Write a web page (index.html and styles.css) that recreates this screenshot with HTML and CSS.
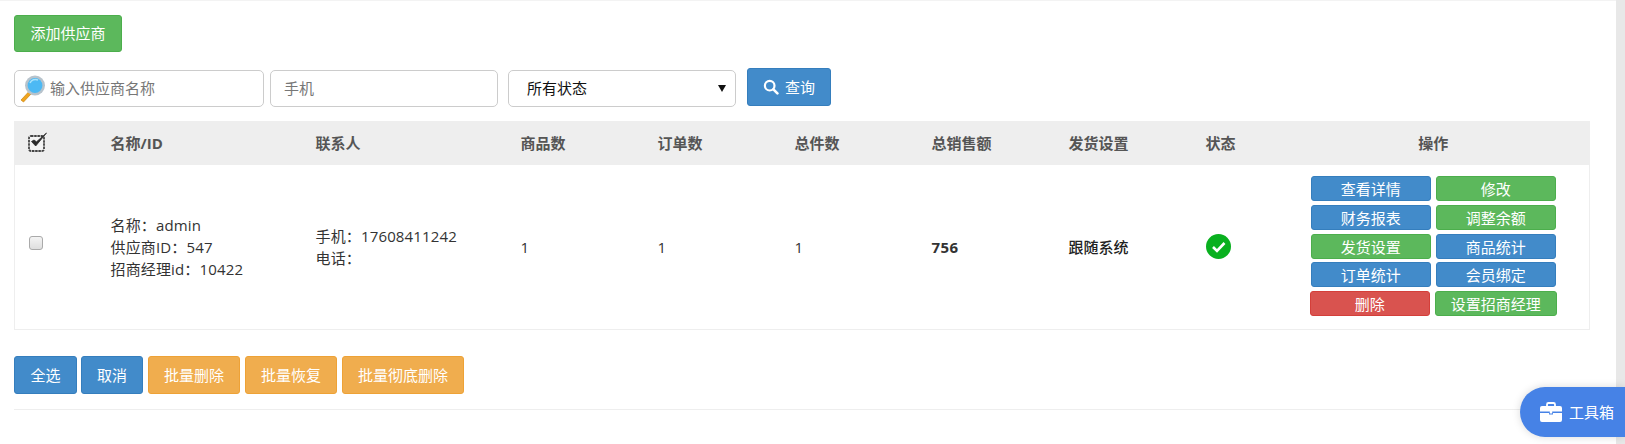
FILE: index.html
```html
<!DOCTYPE html>
<html lang="zh">
<head>
<meta charset="utf-8">
<title>供应商</title>
<link rel="stylesheet" href="styles.css">
</head>
<body>
<div class="scrollbar"></div>
<main class="page">
  <div class="add-row"><button class="btn green add">添加供应商</button></div>
  <form class="filters">
    <label class="input search">
      <svg class="lens" width="26" height="28" viewBox="0 0 26 28"><path d="M3.500 27 1 25 8.500 17 11 19Z" fill="#f0a51e" stroke="#c98412" stroke-width=".7"/><circle cx="15" cy="10.500" r="10" fill="#b7c3cc"/><circle cx="15" cy="10.500" r="7.400" fill="#4cb9f4"/><path d="M10 8a6 6 0 0 1 8-3" stroke="#a9e2fb" stroke-width="1.500" fill="none"/></svg>
      <span>输入供应商名称</span>
    </label>
    <label class="input phone"><span>手机</span></label>
    <div class="input status"><span>所有状态</span><i class="arrow"></i></div>
    <button type="button" class="btn blue query">
      <svg width="16" height="16" viewBox="0 0 16 16"><circle cx="6.700" cy="6.700" r="4.800" fill="none" stroke="#fff" stroke-width="2.200"/><path d="m10.400 10.400 4 4" stroke="#fff" stroke-width="2.600" stroke-linecap="round"/></svg>
      查询
    </button>
  </form>
  <table class="grid">
    <colgroup>
      <col class="c-check"><col class="c-wide"><col class="c-wide"><col class="c-num"><col class="c-num"><col class="c-num"><col class="c-num"><col class="c-num"><col class="c-state"><col>
    </colgroup>
    <thead>
      <tr>
        <th>
          <svg class="all" width="20" height="20" viewBox="0 0 20 20"><rect x="1" y="4" width="15" height="15" rx="2" fill="#f4f4f4" stroke="#444" stroke-width="1.800" stroke-dasharray="2.500 .7"/><path d="m3.500 9.500 4.200 4.500L18.500 1 8.500 9.800 6 8Z" fill="#2b2b2b" stroke="#2b2b2b" stroke-width=".8"/></svg>
        </th>
        <th>名称/ID</th><th>联系人</th><th>商品数</th><th>订单数</th><th>总件数</th><th>总销售额</th><th>发货设置</th><th>状态</th><th class="center">操作</th>
      </tr>
    </thead>
    <tbody>
      <tr>
        <td><span class="check"></span></td>
        <td class="lines">名称：admin<br>供应商ID：547<br>招商经理id：10422</td>
        <td class="lines">手机：17608411242<br>电话：</td>
        <td>1</td><td>1</td><td>1</td>
        <td class="strong">756</td>
        <td class="medium">跟随系统</td>
        <td>
          <svg class="ok" width="25" height="25" viewBox="0 0 25 25"><circle cx="12.500" cy="12.500" r="12.500" fill="#09b01f"/><path d="m7 13 4 4 7.500-8" fill="none" stroke="#fff" stroke-width="2.600"/></svg>
        </td>
        <td class="action-cell">
          <div class="actions">
            <button class="btn small blue">查看详情</button><button class="btn small green">修改</button>
            <button class="btn small blue">财务报表</button><button class="btn small green">调整余额</button>
            <button class="btn small green">发货设置</button><button class="btn small blue">商品统计</button>
            <button class="btn small blue lift">订单统计</button><button class="btn small blue lift">会员绑定</button>
            <button class="btn small red shift">删除</button><button class="btn small green shift wider">设置招商经理</button>
          </div>
        </td>
      </tr>
    </tbody>
  </table>
  <div class="batch">
    <button class="btn blue b1">全选</button>
    <button class="btn blue b2">取消</button>
    <button class="btn orange b3">批量删除</button>
    <button class="btn orange b3">批量恢复</button>
    <button class="btn orange b4">批量彻底删除</button>
  </div>
  <hr class="rule">
</main>
<aside class="toolbox">
  <svg width="22" height="20" viewBox="0 0 22 20"><path d="M7 4V2.500A1.500 1.500 0 0 1 8.500 1h5A1.500 1.500 0 0 1 15 2.500V4" fill="none" stroke="#fff" stroke-width="1.800"/><path d="M2 4h18a2 2 0 0 1 2 2v3.500H0V6a2 2 0 0 1 2-2ZM0 11h9v1.500h4V11h9v7a2 2 0 0 1-2 2H2a2 2 0 0 1-2-2Z" fill="#fff"/><rect x="9.800" y="9" width="2.400" height="2.500" fill="#fff"/></svg>
  <span>工具箱</span>
</aside>
</body>
</html>
```

FILE: styles.css
```css
* { box-sizing: border-box; }
html, body { margin: 0; height: 444px; overflow: hidden; }
body {
  background: #fff;
  color: #333;
  font: 15px/1.5 "Open Sans", "Noto Sans CJK SC", sans-serif;
  position: relative;
}
.page {
  width: 1616px;
  border-top: 1px solid #f3f3f3;
  padding: 14px 0 0 14px;
}
.scrollbar {
  position: absolute;
  top: 0;
  right: 0;
  bottom: 0;
  width: 9px;
  background: #e8e8e8;
}
.btn {
  display: block;
  margin: 0;
  padding: 0;
  border: 1px solid;
  border-radius: 3px;
  color: #fff;
  font: inherit;
  text-align: center;
}
.green { background: #5cb85c; border-color: #4cae4c; }
.blue { background: #428bca; border-color: #357ebd; }
.red { background: #d9534f; border-color: #d43f3a; }
.orange { background: #f0ad4e; border-color: #eea236; }
.add { width: 108px; height: 37px; }
.filters {
  display: flex;
  align-items: flex-start;
  margin-top: 16px;
  height: 53px;
}
.input {
  display: flex;
  align-items: center;
  height: 37px;
  margin-top: 2px;
  border: 1px solid #ccc;
  border-radius: 5px;
  color: #777;
  background: #fff;
}
.search { width: 250px; padding-left: 5px; gap: 4px; }
.lens { flex: none; }
.phone { width: 228px; margin-left: 6px; padding-left: 13px; }
.status {
  width: 228px;
  margin-left: 10px;
  padding: 0 9px 0 18px;
  color: #111;
  justify-content: space-between;
}
.arrow {
  width: 0;
  height: 0;
  border: 4px solid transparent;
  border-top: 7px solid #111;
  border-bottom: 0;
}
.query {
  display: flex;
  align-items: center;
  justify-content: center;
  gap: 6px;
  width: 84px;
  height: 38px;
  margin-left: 11px;
}
.grid {
  width: 1576px;
  border-collapse: collapse;
  table-layout: fixed;
  border: 1px solid #eee;
}
.c-check { width: 83px; }
.c-wide { width: 205px; }
.c-num { width: 137px; }
.c-state { width: 85px; }
th {
  height: 43px;
  padding: 0 0 0 13px;
  background: #eee;
  color: #555;
  font-weight: 700;
  text-align: left;
}
th.center { padding: 0; text-align: center; }
th .all { display: block; margin-top: -2px; }
td {
  height: 165px;
  padding: 0 0 0 13px;
  vertical-align: middle;
}
td.action-cell { padding: 0 0 1px; }
.lines { line-height: 22px; letter-spacing: .15px; }
.strong { font-weight: 700; letter-spacing: .4px; }
.medium { font-weight: 500; color: #222; }
.ok { display: block; }
.check {
  display: block;
  width: 14px;
  height: 14px;
  margin: -7px 0 0 1px;
  border: 1px solid #aaa;
  border-radius: 3px;
  background: linear-gradient(#f4f4f4, #dedede);
}
.actions {
  display: grid;
  grid-template-columns: 120px 120px;
  grid-template-rows: 25px 25px 25px 24px 25px;
  gap: 4px 5px;
  margin: 0 auto;
  width: 245px;
}
.small { height: 25px; line-height: 22px; }
.lift { margin-top: -1px; }
.shift { position: relative; left: -1px; }
.wider { width: 122px; }
.batch {
  display: flex;
  gap: 4px;
  margin-top: 26px;
}
.b1 { width: 63px; height: 38px; }
.b2 { width: 62px; height: 38px; }
.b3 { width: 92px; height: 38px; margin-left: 1px; }
.b4 { width: 122px; height: 38px; margin-left: 1px; }
.rule {
  border: 0;
  border-top: 1px solid #eee;
  margin: 15px 0 0;
}
.toolbox {
  position: absolute;
  left: 1520px;
  top: 387px;
  right: 0;
  height: 50px;
  display: flex;
  align-items: center;
  gap: 7px;
  padding-left: 20px;
  border-radius: 25px 0 0 25px;
  background: #4682e6;
  color: #fff;
  box-shadow: 0 0 8px rgba(0,0,0,.15);
}
```
